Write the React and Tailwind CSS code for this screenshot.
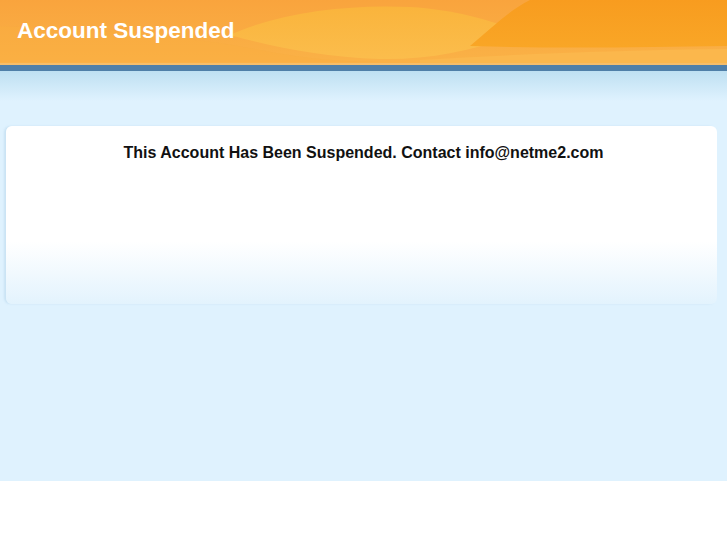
export default function App() {
  return (
    <div className="w-full bg-white" style={{ fontFamily: '"Liberation Sans", Arial, sans-serif' }}>
      <div className="h-[481px] bg-[#dff2fe] flex flex-col">
        {/* header */}
        <div className="relative h-[65px] overflow-hidden bg-gradient-to-b from-[#f9a43d] to-[#fab247]">
          <svg className="absolute inset-0" width="727" height="65" viewBox="0 0 727 65" preserveAspectRatio="none">
            <defs>
              <linearGradient id="dark" x1="0" y1="0" x2="0" y2="1">
                <stop offset="0" stopColor="#f89c1f" />
                <stop offset="1" stopColor="#f9a626" />
              </linearGradient>
              <linearGradient id="lens" x1="0" y1="0" x2="0" y2="1">
                <stop offset="0" stopColor="#fab43c" />
                <stop offset="1" stopColor="#fbbd4c" />
              </linearGradient>
            </defs>
            <path d="M0 26 C80 30 180 34 260 50 C300 58 340 62 380 62 L0 62 Z" fill="#f9ad3f" opacity="0.5" />
            <path d="M230 35 C280 12 350 4 410 7 C460 10 495 22 520 32 C480 50 430 60 380 59 C320 57 270 46 230 35 Z" fill="url(#lens)" />
            <path d="M530 0 L727 0 L727 46 C650 47 560 49 470 46 C495 25 510 10 530 0 Z" fill="url(#dark)" />
            <path d="M420 60 C520 54 620 50 727 49 L727 65 L420 65 Z" fill="#fbb74c" />
            <path d="M0 63 L727 63 L727 65 L0 65 Z" fill="#f5bd6a" />
          </svg>
          <h1 className="relative pl-[17px] pt-[18px] text-[22.5px] leading-[26px] font-bold text-white">
            Account Suspended
          </h1>
        </div>
        <div className="h-[6px] bg-[#4f7fa8]" />
        <div className="h-[30px] bg-gradient-to-b from-[#bee0f2] to-[#dff2fe]" />

        {/* card */}
        <div className="ml-[6px] mr-[10px] mt-[25px] h-[178px] rounded-[6px] bg-gradient-to-b from-white from-[65%] to-[#e3f3fd] shadow-[-2px_0_2px_rgba(170,205,230,0.4)]">
          <p className="pl-[4px] pt-[17px] text-center text-[16px] leading-[19px] font-bold text-[#111]">
            This Account Has Been Suspended. Contact info@netme2.com
          </p>
        </div>
      </div>
      <div className="h-[64px] bg-white" />
    </div>
  );
}
